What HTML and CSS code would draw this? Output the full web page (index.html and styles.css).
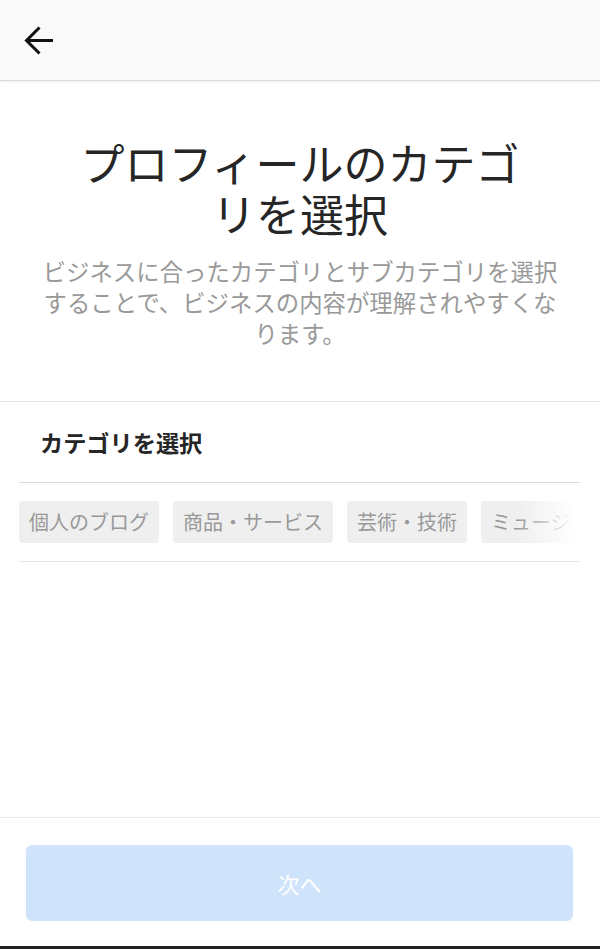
FILE: index.html
```html
<!DOCTYPE html>
<html lang="ja">
<head>
<meta charset="utf-8">
<title>プロフィールのカテゴリを選択</title>
<link rel="stylesheet" href="styles.css">
</head>
<body>
<div class="screen">
  <header class="topbar">
    <svg class="back" width="32" height="32" viewBox="0 0 32 32" aria-hidden="true">
      <path d="M2.5 15.5 H29 M15.5 2.5 L2.5 15.5 L15.5 28.5" fill="none" stroke="#111" stroke-width="3" stroke-linecap="butt" stroke-linejoin="miter"/>
    </svg>
  </header>
  <main class="content">
    <h1 class="title"><span class="line">プロフィールのカテゴ</span><span class="line">リを選択</span></h1>
    <p class="subtitle">ビジネスに合ったカテゴリとサブカテゴリを選択<br>することで、ビジネスの内容が理解されやすくな<br>ります。</p>
    <section class="picker">
      <div class="picker-head">カテゴリを選択</div>
      <div class="chips-wrap">
        <div class="chips">
          <span class="chip">個人のブログ</span>
          <span class="chip">商品・サービス</span>
          <span class="chip">芸術・技術</span>
          <span class="chip">ミュージシャン</span>
        </div>
        <div class="fade"></div>
      </div>
    </section>
  </main>
  <footer class="footer">
    <button class="next" type="button">次へ</button>
  </footer>
  <div class="bottom-bar"></div>
</div>
</body>
</html>
```
FILE: styles.css
```css
html, body {
  margin: 0;
  padding: 0;
  background: #ffffff;
}
body {
  font-family: "Noto Sans CJK JP", "Noto Sans", sans-serif;
}
.screen {
  width: 600px;
  height: 949px;
  display: flex;
  flex-direction: column;
  overflow: hidden;
}
.topbar {
  height: 80px;
  flex: 0 0 80px;
  background: #f9f9f9;
  border-bottom: 1px solid #dcdcdc;
  box-shadow: 0 1px 2px rgba(0,0,0,0.06);
  display: flex;
  align-items: center;
  padding-left: 24px;
}
.back {
  display: block;
  margin-top: 1px;
}
.content {
  flex: 1 1 auto;
  display: flex;
  flex-direction: column;
  padding-top: 56px;
}
.title {
  margin: 0;
  text-align: center;
  font-size: 44px;
  line-height: 51px;
  font-weight: 400;
  color: #262626;
}
.title .line {
  display: block;
  height: 51px;
}
.subtitle {
  margin: 17px 0 0;
  text-align: center;
  font-size: 23.4px;
  line-height: 31px;
  color: #999999;
}
.picker {
  margin-top: 52px;
  border-top: 1px solid #e6e6e6;
}
.picker-head {
  height: 80px;
  display: flex;
  align-items: center;
  font-size: 23.2px;
  font-weight: 700;
  color: #262626;
  margin: 0 20px 0 19px;
  padding-left: 21px;
  border-bottom: 1px solid #dbdbdb;
}
.chips-wrap {
  position: relative;
  margin: 0 20px 0 19px;
  padding: 18px 0 18px;
  border-bottom: 1px solid #e6e6e6;
  overflow: hidden;
}
.chips {
  display: flex;
  gap: 14px;
  white-space: nowrap;
}
.chip {
  flex: 0 0 auto;
  height: 42px;
  line-height: 42px;
  padding: 0 10px;
  background: #efefef;
  border-radius: 4px;
  color: #999999;
  font-size: 20px;
}
.fade {
  position: absolute;
  top: 0;
  right: 0;
  bottom: 0;
  width: 64px;
  background: linear-gradient(to right, rgba(255,255,255,0), #ffffff 92%);
}
.footer {
  flex: 0 0 auto;
  border-top: 1px solid #ececec;
  padding: 27px 27px 25px 26px;
}
.next {
  display: block;
  width: 100%;
  height: 76px;
  border: none;
  border-radius: 6px;
  background: #cfe4fa;
  color: #ffffff;
  font-family: "Noto Sans CJK JP", "Noto Sans", sans-serif;
  font-size: 22px;
  padding: 0;
}
.bottom-bar {
  flex: 0 0 3px;
  height: 3px;
  background: #222222;
}
```
